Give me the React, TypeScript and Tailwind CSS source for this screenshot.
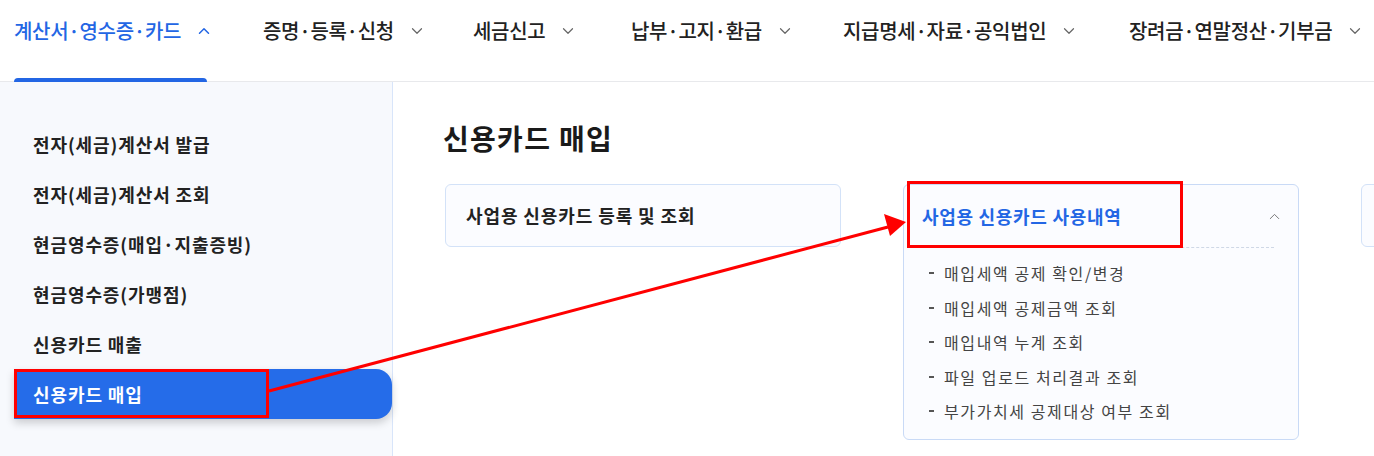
import { ChevronDown, ChevronUp } from "lucide-react";

const navItems = [
  { label: "계산서·영수증·카드", width: "w-[249px]", active: true },
  { label: "증명·등록·신청", width: "w-[210px]" },
  { label: "세금신고", width: "w-[158px]" },
  { label: "납부·고지·환급", width: "w-[212px]" },
  { label: "지급명세·자료·공익법인", width: "w-[286px]" },
  { label: "장려금·연말정산·기부금", width: "w-[260px]" },
];

const sideItems = [
  "전자(세금)계산서 발급",
  "전자(세금)계산서 조회",
  "현금영수증(매입·지출증빙)",
  "현금영수증(가맹점)",
  "신용카드 매출",
];

const subItems = [
  "매입세액 공제 확인/변경",
  "매입세액 공제금액 조회",
  "매입내역 누계 조회",
  "파일 업로드 처리결과 조회",
  "부가가치세 공제대상 여부 조회",
];

const TopNav = () => (
  <header className="flex h-[82px] shrink-0 border-b border-[#e8e9ec] pl-[14px]">
    {navItems.map((item) => (
      <div key={item.label} className={`${item.width} flex shrink-0 flex-col justify-between`}>
        <div
          className={`mt-[17px] flex items-center gap-[14px] text-[20px] leading-[28px] font-medium tracking-[-0.3px] ${
            item.active ? "text-[#2366e4]" : "text-[#222]"
          }`}
        >
          <span>{item.label}</span>
          {item.active ? (
            <ChevronUp className="h-[18px] w-[18px] text-[#2366e4]" strokeWidth={2} />
          ) : (
            <ChevronDown className="h-[18px] w-[18px] text-[#666]" strokeWidth={1.6} />
          )}
        </div>
        {item.active && <div className="mb-[-1px] h-[4px] w-[193px] rounded-t-full bg-[#2366e4]" />}
      </div>
    ))}
  </header>
);

const Sidebar = () => (
  <aside className="w-[393px] shrink-0 border-r border-[#d8e5fa] bg-[#f7f9fd] pt-[37px]">
    {sideItems.map((label) => (
      <div key={label} className="flex h-[50px] items-center pl-[33px] text-[18px] font-semibold tracking-[0.9px] text-[#222]">
        {label}
      </div>
    ))}
    <div className="relative ml-[14px] flex h-[50px] items-center rounded-r-[16px] bg-[#256ce9] pl-[19px] text-[18px] font-semibold tracking-[0.9px] text-white shadow-[0_4px_8px_rgba(0,0,0,0.18)]">
      신용카드 매입
      <div className="absolute left-0 top-0 h-[49px] w-[255px] border-[3px] border-[#ff0000]" />
    </div>
  </aside>
);

const Main = () => (
  <main className="flex-1 pl-[50px] pt-[37px]">
    <h1 className="text-[28px] leading-[38px] font-bold tracking-[1.3px] text-[#1a1a1a]">신용카드 매입</h1>
    <div className="mt-[27px] ml-[2px] flex items-start gap-[62px]">
      <div className="flex h-[63px] w-[396px] shrink-0 items-center rounded-[6px] border border-[#d3e2f8] bg-[#fbfcff] pl-[20px] text-[18px] font-semibold tracking-[0.9px] text-[#222]">
        사업용 신용카드 등록 및 조회
      </div>
      <div className="relative w-[396px] shrink-0 rounded-[6px] border border-[#c9daf6] bg-[#fbfcff] pb-[10px]">
        <div className="flex h-[62px] items-center justify-between pl-[18px] pr-[15px]">
          <span className="text-[18px] font-semibold tracking-[0.7px] text-[#2366e4]">사업용 신용카드 사용내역</span>
          <ChevronUp className="h-[17px] w-[17px] text-[#777]" strokeWidth={1.4} />
        </div>
        <div className="ml-[18px] mr-[24px] border-t border-dashed border-[#cfd8e6]" />
        <ul className="pt-[8px] pl-[25px]">
          {subItems.map((s) => (
            <li key={s} className="flex h-[34.5px] items-center gap-[10px] text-[16px] tracking-[1.6px] text-[#444]">
              <span className="h-[2px] w-[5px] bg-[#555]" />
              {s}
            </li>
          ))}
        </ul>
        <div className="absolute left-[3px] top-[-4px] h-[67px] w-[276px] border-[3px] border-[#ff0000]" />
      </div>
      <div className="h-[63px] w-[396px] shrink-0 rounded-[6px] border border-[#d3e2f8] bg-[#fbfcff]" />
    </div>
  </main>
);

export default function App() {
  return (
    <div className="relative flex h-[456px] w-[1374px] flex-col overflow-hidden bg-white font-['Noto_Sans_CJK_KR',sans-serif]">
      <TopNav />
      <div className="flex flex-1">
        <Sidebar />
        <Main />
      </div>
      {/* annotation arrow */}
      <svg className="pointer-events-none absolute left-0 top-0" width={1374} height={456}>
        <line x1={269} y1={391} x2={888} y2={227} stroke="#ff0000" strokeWidth={3} />
        <polygon points="906,222 884,214 890,236" fill="#ff0000" />
      </svg>
    </div>
  );
}
